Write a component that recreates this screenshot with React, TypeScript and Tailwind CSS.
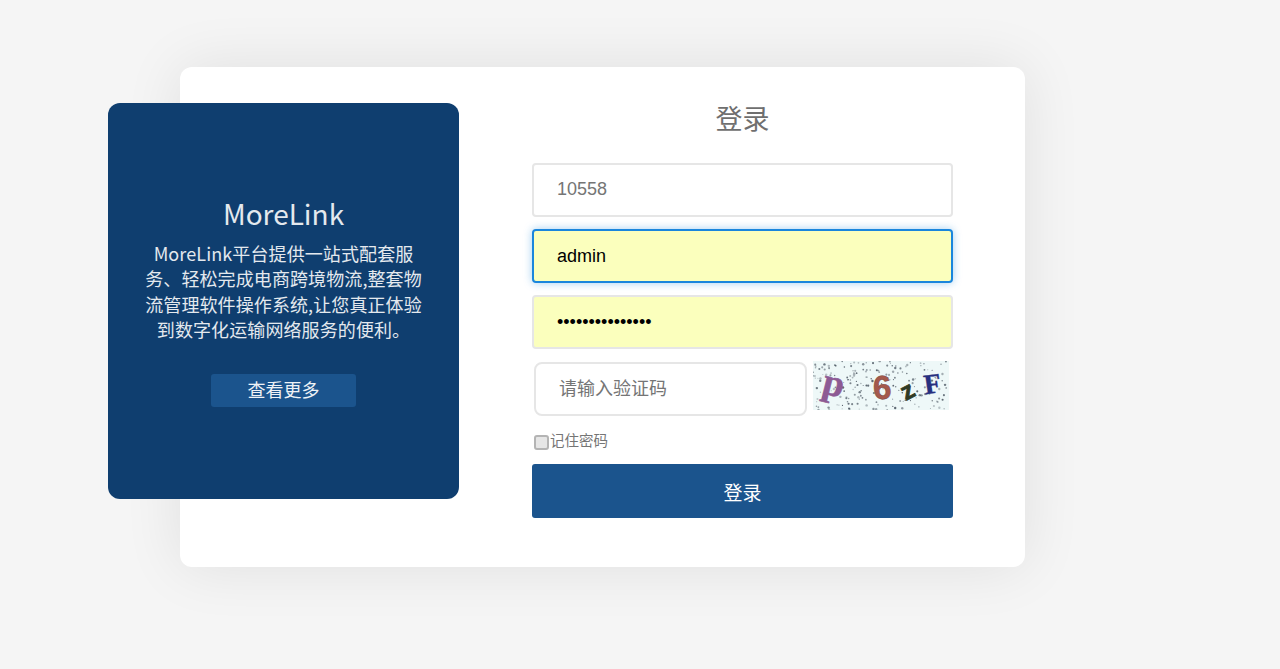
const cjk = "font-['Liberation_Sans','Noto_Sans_CJK_SC',sans-serif]";

// fake captcha speckle, fixed seed so the picture stays the same
function dots() {
  const out: { x: number; y: number; o: number; r: number }[] = [];
  let s = 17;
  for (let i = 0; i < 210; i++) {
    s = (s * 9301 + 49297) % 233280;
    const x = (s / 233280) * 136;
    s = (s * 9301 + 49297) % 233280;
    const y = (s / 233280) * 49;
    s = (s * 9301 + 49297) % 233280;
    out.push({ x, y, o: 0.3 + (s / 233280) * 0.6, r: 0.6 + (s % 5) * 0.15 });
  }
  return out;
}

function Captcha() {
  return (
    <svg width="136" height="49" viewBox="0 0 136 49" className="ml-[6px] mt-[-1px] self-start shrink-0">
      <rect width="136" height="49" fill="#eef8f8" />
      {dots().map((d, i) => (
        <circle key={i} cx={d.x} cy={d.y} r={d.r} fill="#4a5560" opacity={d.o} />
      ))}
      <text x="9" y="35" transform="rotate(14 22 28)" fontFamily="Liberation Serif" fontWeight="700" fontSize="38" fill="#8d5a94" stroke="#8d5a94" strokeWidth="0.6">p</text>
      <text x="60" y="38" transform="rotate(-4 68 28)" fontFamily="Liberation Sans" fontWeight="700" fontSize="33" fill="#a5594c" stroke="#7d4a44" strokeWidth="0.5">6</text>
      <text x="89" y="37" transform="rotate(-28 97 31)" fontFamily="Liberation Sans" fontWeight="700" fontSize="25" fill="#2f3a24" stroke="#2f3a24" strokeWidth="0.8">z</text>
      <text x="111" y="32" transform="rotate(-8 120 24)" fontFamily="Liberation Serif" fontWeight="700" fontSize="28" fill="#27307f" stroke="#27307f" strokeWidth="0.4">F</text>
    </svg>
  );
}

export default function App() {
  return (
    <div className={`min-h-[669px] bg-[#f5f5f5] pt-[67px] pl-[180px] ${cjk}`}>
      <div className="flex h-[500px] w-[845px] items-start rounded-[12px] bg-white shadow-[0_0_60px_rgba(0,0,0,0.09)]">
        <div className="ml-[-72px] mt-[36px] flex h-[396px] w-[351px] shrink-0 flex-col items-center rounded-[12px] bg-[#0f3e6f] pt-[92px] text-[#e4e9ee] font-['Noto_Sans_CJK_SC',sans-serif]">
          <h2 className="text-[28px] leading-[36px]">MoreLink</h2>
          <p className="mt-[10px] w-[285px] text-center text-[18px] leading-[25.3px] tracking-[0.1px]">
            MoreLink平台提供一站式配套服务、轻松完成电商跨境物流,整套物流管理软件操作系统,让您真正体验到数字化运输网络服务的便利。
          </p>
          <button type="button" className="mt-[32px] h-[33px] w-[145px] rounded-[3px] bg-[#1b548d] pb-[2px] text-[18px] text-[#eef2f6]">
            查看更多
          </button>
        </div>
        <div className="ml-[73px] mt-[35px] flex w-[421px] shrink-0 flex-col">
          <h1 className="text-center text-[27px] leading-[36px] text-[#6f6f6f]">登录</h1>
          <input
            placeholder="10558"
            className="mt-[25px] h-[54px] w-full rounded-[4px] border-2 border-[#e6e6e6] bg-white px-[23px] pb-[1px] text-[18px] outline-none placeholder:text-[#757575]"
          />
          <input
            defaultValue="admin"
            className="mt-[12px] h-[54px] w-full rounded-[4px] border-2 border-[#1a86dc] bg-[#fbffbd] px-[23px] text-[18px] text-black shadow-[0_0_8px_rgba(26,134,220,0.4)] outline-none"
          />
          <input
            type="password"
            defaultValue="admin1234567890"
            className="mt-[12px] h-[54px] w-full rounded-[4px] border-2 border-[#e6e6e6] bg-[#fbffbd] px-[23px] text-[18px] text-black outline-none"
          />
          <div className="mt-[13px] flex pl-[2px]">
            <input
              placeholder="请输入验证码"
              className="h-[54px] w-[273px] rounded-[8px] border-2 border-[#e6e6e6] bg-white px-[23px] text-[18px] outline-none placeholder:text-[#757575]"
            />
            <Captcha />
          </div>
          <label className="mt-[14px] flex h-[22px] items-center pl-[2px] text-[14.5px] text-[#757575]">
            <input type="checkbox" className="mt-[3px] h-[15px] w-[15px] appearance-none rounded-[3px] border-2 border-[#b4b4b4] bg-[#e6e6e6]" />
            <span className="ml-px mt-px">记住密码</span>
          </label>
          <button type="button" className="mt-[12px] h-[54px] w-full rounded-[3px] bg-[#1b548d] pt-[6px] text-[19px] text-white">
            登录
          </button>
        </div>
      </div>
    </div>
  );
}
